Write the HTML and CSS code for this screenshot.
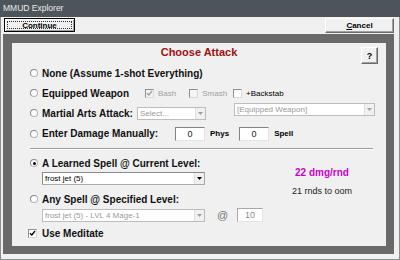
FILE: index.html
```html
<!DOCTYPE html>
<html>
  <head>
    <title>MMUD Explorer</title>
    <link rel="stylesheet" href="styles.css">
  </head>
  <body>
    <div class="window">
      <div class="titlebar">MMUD Explorer</div>
      <div class="toolbar">
        <button class="btn btn-continue"><span class="focus">Continue</span></button>
        <button class="btn btn-cancel"><u>C</u>ancel</button>
      </div>
      <div class="frame">
        <div class="panel">
          <div class="hdr">
            <h1 class="heading">Choose Attack</h1>
            <button class="btn help">?</button>
          </div>
          <div class="body">
            <div class="opt"><span class="radio"></span><span class="lbl">None (Assume 1-shot Everything)</span></div>

            <div class="split">
              <div class="split-left">
                <div class="opt">
                  <span class="radio"></span><span class="lbl lbl-eq">Equipped Weapon</span>
                  <span class="chk off">
                    <svg viewBox="0 0 7 7"><path d="M1 3.2l1.8 1.8 3.2-4" fill="none" stroke="#a0a0a0" stroke-width="1.4"/></svg>
                  </span><span class="small off">Bash</span>
                  <span class="chk off chk-gap"></span><span class="small off">Smash</span>
                </div>
                <div class="opt">
                  <span class="radio"></span><span class="lbl lbl-ma">Martial Arts Attack:</span>
                  <div class="combo off combo-ma">
                    <span class="val">Select...</span>
                    <span class="arrow"><svg viewBox="0 0 5 3"><path d="M0 0h5L2.5 3z" fill="#a0a0a0"/></svg></span>
                  </div>
                </div>
              </div>
              <div class="split-right">
                <div class="opt"><span class="chk"></span><span class="small">+Backstab</span></div>
                <div class="combo off combo-eq">
                  <span class="val">[Equipped Weapon]</span>
                  <span class="arrow"><svg viewBox="0 0 5 3"><path d="M0 0h5L2.5 3z" fill="#a0a0a0"/></svg></span>
                </div>
              </div>
            </div>

            <div class="opt opt-dmg">
              <span class="radio"></span><span class="lbl lbl-dm">Enter Damage Manually:</span>
              <span class="field">0</span><span class="unit">Phys</span>
              <span class="field field-gap">0</span><span class="unit">Spell</span>
            </div>

            <div class="rule"></div>

            <div class="lower">
              <div class="lower-left">
                <div class="opt opt-sm"><span class="radio on"></span><span class="lbl">A Learned Spell @ Current Level:</span></div>
                <div class="combo combo-spell">
                  <span class="val">frost jet (5)</span>
                  <span class="arrow"><svg viewBox="0 0 5 3"><path d="M0 0h5L2.5 3z" fill="#000"/></svg></span>
                </div>
                <div class="opt opt-sm opt-any"><span class="radio"></span><span class="lbl">Any Spell @ Specified Level:</span></div>
                <div class="pick-row">
                  <div class="combo off combo-spell">
                    <span class="val">frost jet (5) - LVL 4 Mage-1</span>
                    <span class="arrow"><svg viewBox="0 0 5 3"><path d="M0 0h5L2.5 3z" fill="#a0a0a0"/></svg></span>
                  </div>
                  <span class="at">@</span>
                  <span class="field field-lvl off">10</span>
                </div>
                <div class="opt opt-sm opt-med">
                  <span class="chk">
                    <svg viewBox="0 0 7 7"><path d="M1 3.2l1.8 1.8 3.2-4" fill="none" stroke="#000" stroke-width="1.4"/></svg>
                  </span><span class="lbl">Use Meditate</span>
                </div>
              </div>
              <div class="stats">
                <div class="dmg">22 dmg/rnd</div>
                <div class="oom">21 rnds to oom</div>
              </div>
            </div>
          </div>
        </div>
      </div>
    </div>
  </body>
</html>
```

FILE: styles.css
```css
body {
  margin: 0;
  font-family: "Liberation Sans", Arial, sans-serif;
}
.window {
  width: 400px;
  height: 260px;
  background-color: #f0f0f0;
  display: flex;
  flex-direction: column;
  box-shadow: inset 1px 0 #8a8e92, inset -1px 0 #8a8e92, inset 0 -1px #8a8e92;
}
.titlebar {
  height: 17px;
  background-color: #4d555b;
  color: #e8eaec;
  font-size: 8.5px;
  line-height: 17px;
  padding-left: 3px;
}
.toolbar {
  display: flex;
  justify-content: space-between;
  height: 17px;
  padding: 1px 6px 0 4px;
  box-sizing: border-box;
}
.btn {
  font: bold 8px "Liberation Sans", Arial, sans-serif;
  color: #000;
  background-color: #f0f0f0;
  border: 1px solid;
  border-color: #fff #6a6a6a #6a6a6a #fff;
  padding: 0;
}
.btn-continue {
  width: 71px;
  height: 14px;
  border-color: #000;
  box-shadow: inset 1px 1px #fff, inset -1px -1px #a0a0a0;
  padding: 2px;
}
.focus {
  display: block;
  height: 100%;
  border: 1px dotted #333;
  box-sizing: border-box;
  line-height: 8px;
}
.btn-cancel {
  width: 69px;
  height: 15px;
  box-shadow: inset -1px -1px #a0a0a0;
}
.frame {
  flex: 1;
  display: flex;
  margin: 0 6px 6px 3px;
  padding: 9px 8px 8px 9px;
  background-color: #696969;
}
.panel {
  flex: 1;
  background-color: #f0f0f0;
}
.hdr {
  display: grid;
  grid-template-columns: 1fr auto 1fr;
  align-items: start;
  height: 16px;
  padding-top: 4px;
}
.heading {
  grid-column: 2;
  margin: -1px 0 0;
  font: bold 11px/12px "Liberation Sans", Arial, sans-serif;
  color: #a01010;
}
.help {
  grid-column: 3;
  justify-self: end;
  width: 17px;
  height: 17px;
  margin-right: 8px;
  font-size: 9px;
  box-shadow: inset -1px -1px #a0a0a0;
}
.body {
  padding-left: 18px;
}
.opt {
  display: flex;
  align-items: center;
  height: 20px;
}
.opt-sm {
  height: 18px;
}
.radio {
  width: 8px;
  height: 8px;
  box-sizing: border-box;
  border-radius: 50%;
  border: 1px solid #b4b4b4;
  border-top-color: #8a8a8a;
  border-left-color: #8a8a8a;
  background-color: #fff;
  margin-right: 4px;
  display: flex;
  align-items: center;
  justify-content: center;
  flex: none;
}
.radio.on::after {
  content: "";
  width: 3px;
  height: 3px;
  border-radius: 50%;
  background-color: #000;
}
.lbl {
  font-weight: bold;
  font-size: 10px;
  color: #111;
  white-space: nowrap;
}
.lbl-eq {
  width: 103px;
}
.lbl-ma {
  width: 95px;
}
.lbl-dm {
  width: 133px;
}
.chk {
  width: 9px;
  height: 9px;
  box-sizing: border-box;
  border: 1px solid #8d8d8d;
  border-right-color: #d8d8d8;
  border-bottom-color: #d8d8d8;
  background-color: #fff;
  margin-right: 4px;
  flex: none;
  display: flex;
}
.chk svg {
  width: 7px;
  height: 7px;
}
.chk.off {
  background-color: #f4f4f4;
}
.chk-gap {
  margin-left: 13px;
}
.small {
  font-size: 8px;
  color: #000;
  white-space: nowrap;
}
.off {
  color: #a0a0a0;
}
.split {
  display: flex;
}
.split-left {
  width: 203px;
}
.split-right {
  width: 142px;
}
.combo {
  display: flex;
  height: 13px;
  box-sizing: border-box;
  border: 1px solid #a9a9a9;
  border-top-color: #8a8a8a;
  border-left-color: #8a8a8a;
  background-color: #fff;
  font-size: 8px;
  line-height: 11px;
  color: #000;
  flex: none;
}
.combo.off {
  color: #9a9a9a;
  border-color: #bdbdbd;
}
.val {
  flex: 1;
  padding-left: 2px;
  white-space: nowrap;
  overflow: hidden;
}
.arrow {
  width: 9px;
  display: flex;
  align-items: center;
  justify-content: center;
  background-color: #f0f0f0;
  border-left: 1px solid #e0e0e0;
}
.arrow svg {
  width: 5px;
  height: 3px;
}
.combo-eq {
  width: 141px;
  margin-left: 1px;
}
.combo-ma {
  width: 69px;
}
.combo-spell {
  width: 163px;
  margin-left: 12px;
}
.field {
  width: 30px;
  height: 14px;
  box-sizing: border-box;
  border: 1px solid #e3e3e3;
  border-top-color: #828282;
  border-left-color: #828282;
  background-color: #fff;
  text-align: center;
  font-size: 9px;
  line-height: 12px;
  color: #222;
}
.field.off {
  color: #8a8a8a;
  border-top-color: #a8a8a8;
  border-left-color: #a8a8a8;
}
.field-gap {
  margin-left: 10px;
}
.field-lvl {
  width: 27px;
  margin-left: 9px;
}
.unit {
  font-weight: bold;
  font-size: 8px;
  margin-left: 5px;
}
.opt-dmg {
  height: 21px;
}
.rule {
  margin: 4px 13px 0 0;
  border-top: 1px solid #a0a0a0;
  border-bottom: 1px solid #fff;
}
.lower {
  display: flex;
  margin-top: 4px;
}
.lower-left {
  width: 233px;
  display: flex;
  flex-direction: column;
}
.opt-any {
  margin-top: 5px;
}
.pick-row {
  display: flex;
  align-items: center;
  height: 14px;
}
.at {
  font-size: 11px;
  color: #777;
  margin-left: 12px;
}
.opt-med {
  margin: 2px 0 0 -2px;
}
.opt-med .chk {
  margin-right: 5px;
}
.stats {
  width: 100px;
  margin-left: 9px;
  padding-top: 13px;
  text-align: center;
}
.dmg {
  font: bold 10px/12px "Liberation Sans", Arial, sans-serif;
  color: #cc00cc;
}
.oom {
  margin-top: 6px;
  font-size: 9px;
  line-height: 12px;
  color: #222;
}
```
